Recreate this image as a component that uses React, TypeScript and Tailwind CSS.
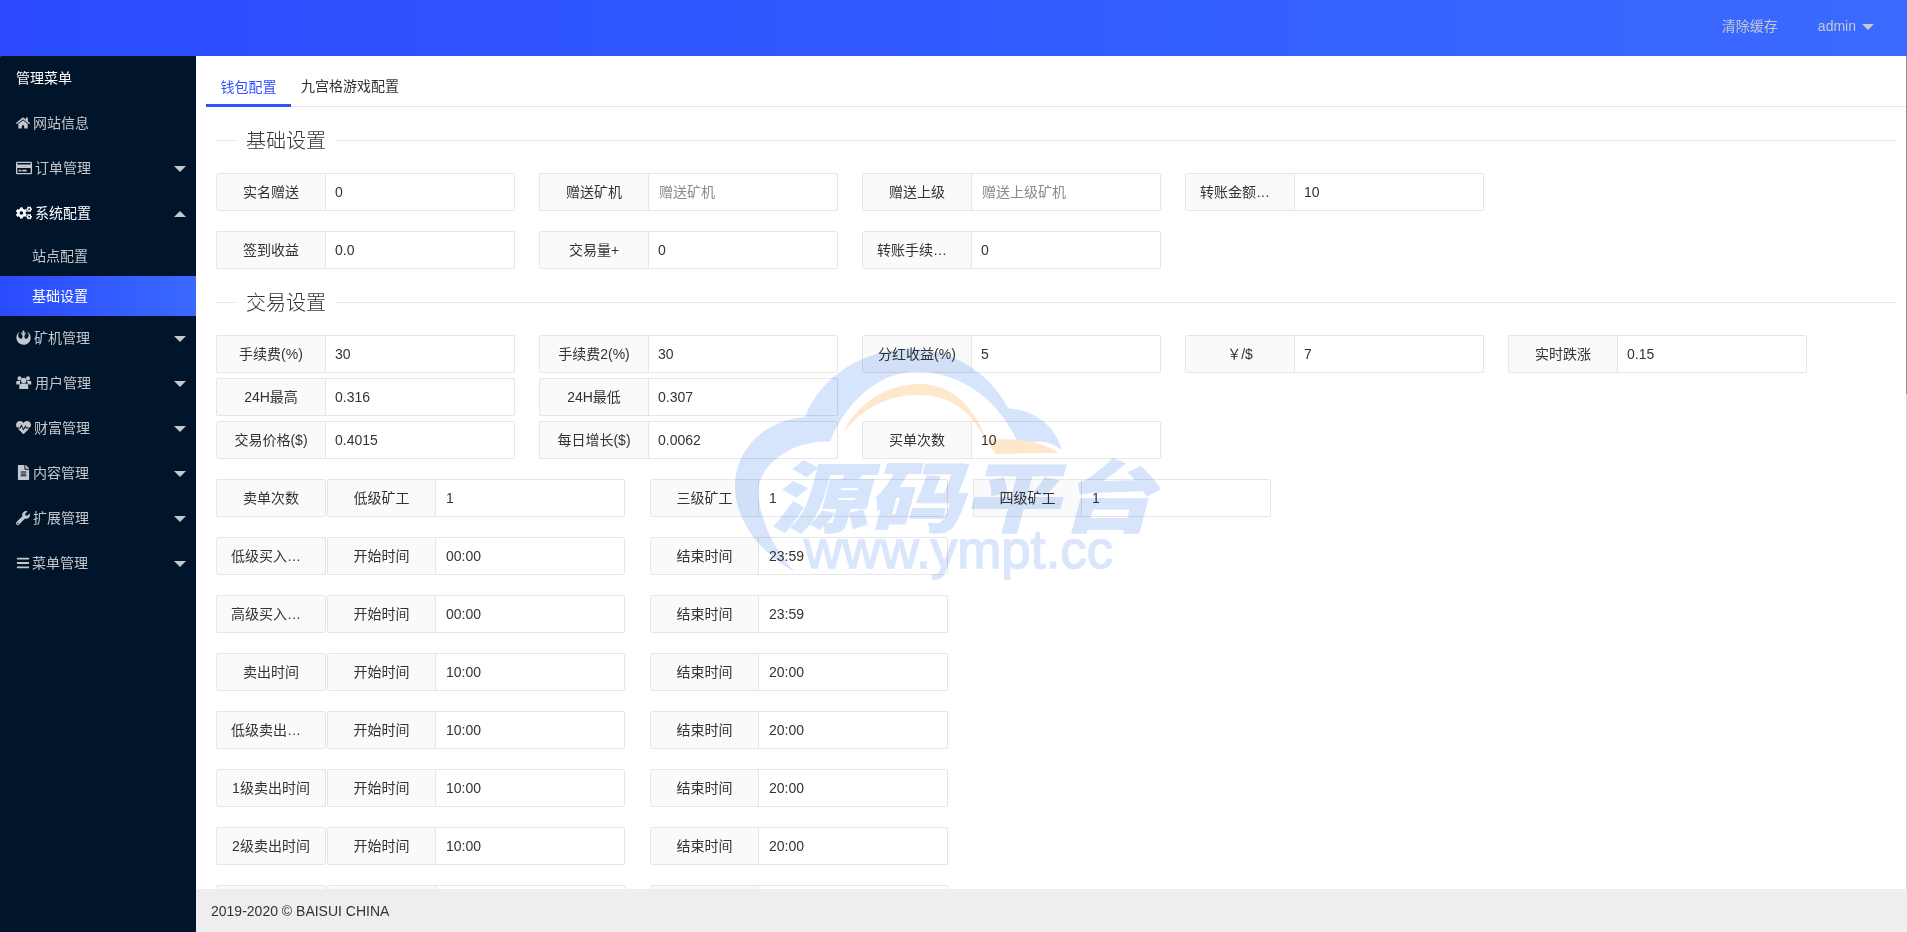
import { FaBars, FaCogs, FaFileAlt, FaHeartbeat, FaHome, FaRebel, FaRegCreditCard, FaWrench } from "react-icons/fa"
import type { IconType } from "react-icons"

const fontStack = "font-['Liberation_Sans','Noto_Sans_CJK_SC',sans-serif]"

// older font-awesome "users": the package only ships the thinner newer one
const UsersIcon: IconType = () => (
    <svg viewBox="0 0 30 26" width="15.5" height="13" fill="currentColor">
        <circle cx="6.5" cy="4.5" r="4" />
        <circle cx="23.5" cy="4.5" r="4" />
        <path d="M0 17V12.5C0 10.5 1.5 9.5 4 9.5H9C7.5 11.5 7 14.5 7.5 17H0ZM30 17V12.5C30 10.5 28.5 9.5 26 9.5H21C22.5 11.5 23 14.5 22.5 17H30Z" />
        <circle cx="15" cy="9" r="5.5" />
        <path d="M6 26V20C6 17 8 15 11 15H19C22 15 24 17 24 20V26H6Z" />
    </svg>
)

type NavItem = {
    icon: IconType
    size: number
    box: string
    label: string
    caret?: boolean
    open?: boolean
}

const navTop: NavItem[] = [
    { icon: FaHome, size: 14, box: "w-[17px]", label: "网站信息" },
    { icon: FaRegCreditCard, size: 16, box: "w-[19px]", label: "订单管理", caret: true },
    { icon: FaCogs, size: 16, box: "w-[19px]", label: "系统配置", caret: true, open: true },
]

const navBottom: NavItem[] = [
    { icon: FaRebel, size: 15, box: "w-[18px]", label: "矿机管理", caret: true },
    { icon: UsersIcon, size: 16, box: "w-[19px]", label: "用户管理", caret: true },
    { icon: FaHeartbeat, size: 15, box: "w-[18px]", label: "财富管理", caret: true },
    { icon: FaFileAlt, size: 15, box: "w-[17px]", label: "内容管理", caret: true },
    { icon: FaWrench, size: 14, box: "w-[17px]", label: "扩展管理", caret: true },
    { icon: FaBars, size: 14, box: "w-[16px]", label: "菜单管理", caret: true },
]

const timeRows = [
    ["低级买入时间", "00:00", "23:59"],
    ["高级买入时间", "00:00", "23:59"],
    ["卖出时间", "10:00", "20:00"],
    ["低级卖出时间", "10:00", "20:00"],
    ["1级卖出时间", "10:00", "20:00"],
    ["2级卖出时间", "10:00", "20:00"],
]

function Caret({ up }: { up?: boolean }) {
    return up ? (
        <span className="h-0 w-0 border-x-[6px] border-b-[6px] border-x-transparent border-b-[#c4c7cc]" />
    ) : (
        <span className="h-0 w-0 border-x-[6px] border-t-[6px] border-x-transparent border-t-[#c4c7cc]" />
    )
}

function SideItem({ item }: { item: NavItem }) {
    const Icon = item.icon
    return (
        <div className={`flex h-[45px] items-center pl-4 pr-[10px] text-sm ${item.open ? "text-white" : "text-[#c4c7cc]"}`}>
            <span className={`flex shrink-0 items-center pb-[2px] ${item.box}`}>
                <Icon size={item.size} />
            </span>
            <span className="flex-1 pb-[2px]">{item.label}</span>
            {item.caret && <Caret up={item.open} />}
        </div>
    )
}

function Legend({ title }: { title: string }) {
    return (
        <div className="flex h-[29px] items-center">
            <div className="h-px w-5 bg-[#e6e6e6]" />
            <span className="px-[10px] pt-[2px] text-[20px] font-light leading-[29px] text-[#333]">{title}</span>
            <div className="h-px flex-1 bg-[#e6e6e6]" />
        </div>
    )
}

// label + input, one bordered box
function Field({ label, value, placeholder }: { label: string; value?: string; placeholder?: string }) {
    return (
        <div className="flex h-[38px] w-[299px] shrink-0 rounded-[2px] border border-[#e6e6e6] text-sm">
            <div className="w-[109px] shrink-0 truncate border-r border-[#e6e6e6] bg-[#fafafa] px-[14px] text-center leading-[36px] text-[#333]">
                {label}
            </div>
            <div className={`flex-1 leading-[36px] ${value ? "pl-[9px] text-[#333]" : "pl-[10px] text-[#8a8a8a]"}`}>{value ?? placeholder}</div>
        </div>
    )
}

function RowLabel({ label }: { label?: string }) {
    return (
        <div className="h-[38px] w-[110px] shrink-0 truncate rounded-[2px] border border-[#e6e6e6] bg-[#fafafa] px-[14px] text-center text-sm leading-[36px] text-[#333]">
            {label}
        </div>
    )
}

function InlineField({ label, value }: { label?: string; value?: string }) {
    return (
        <div className="flex h-[38px] w-[298px] shrink-0 rounded-[2px] border border-[#e6e6e6] text-sm">
            <div className="w-[108px] shrink-0 border-r border-[#e6e6e6] bg-[#fafafa] text-center leading-[36px] text-[#333]">{label}</div>
            <div className="flex-1 pl-[10px] leading-[36px] text-[#333]">{value}</div>
        </div>
    )
}

function Watermark() {
    return (
        <div className="pointer-events-none absolute left-[720px] top-[340px] h-[250px] w-[460px] mix-blend-multiply">
            <svg viewBox="0 0 1380 750" className="absolute inset-0 h-full w-full">
                <path
                    fill="#d6e5fb"
                    d="M225 696C120 640 45 540 45 440C45 330 130 240 255 232C300 110 430 27 570 27C700 27 810 100 865 205C950 210 1010 265 1025 330C985 300 940 295 900 325C850 190 730 95 590 95C480 95 380 180 330 305C220 300 120 370 115 450C115 540 170 640 225 696Z"
                />
                <path
                    fill="#fde8cc"
                    d="M368 282C410 190 500 132 600 132C690 132 760 195 800 300C860 295 960 295 1015 340C960 338 890 340 830 343C800 310 780 260 740 220C700 180 650 165 590 165C500 165 420 210 368 282Z"
                />
            </svg>
            <div className="absolute left-[60px] top-[105px] origin-center -skew-x-12 scale-y-[0.8] whitespace-nowrap font-['Noto_Sans_CJK_SC',sans-serif] text-[96px] font-black leading-[96px] text-[#d6e5fb] [-webkit-text-stroke:1px_#d6e5fb]">
                源码平台
            </div>
            <div className="absolute left-[84px] top-[183px] whitespace-nowrap font-['Liberation_Sans',sans-serif] text-[53px] leading-[54px] text-[#d9e6fb] [-webkit-text-stroke:1.5px_#d9e6fb]">
                www.ympt.cc
            </div>
        </div>
    )
}

export default function App() {
    return (
        <div className={`relative flex h-[932px] flex-col overflow-hidden bg-white ${fontStack}`}>
            {/* Header */}
            <header className="flex h-14 shrink-0 items-center justify-end bg-gradient-to-r from-[#2b4aff] to-[#3b6aff] pb-[4px] pr-[33px] text-sm text-[#c4c9d6]">
                <span>清除缓存</span>
                <span className="ml-10">admin</span>
                <span className="ml-[6px] mt-[2px] h-0 w-0 border-x-[6px] border-t-[6px] border-x-transparent border-t-[#c4c9d6]" />
            </header>

            <div className="flex min-h-0 flex-1 bg-[#2b4aff]">
                {/* Sidebar */}
                <aside className="w-[196px] shrink-0 rounded-tl-[2px] bg-[#00152a]">
                    <div className="flex h-[45px] items-center pb-[2px] pl-4 text-sm text-white">管理菜单</div>
                    {navTop.map((item) => (
                        <SideItem key={item.label} item={item} />
                    ))}
                    <div className="flex h-10 items-center pl-8 text-sm text-[#c4c7cc]">站点配置</div>
                    <div className="flex h-10 items-center bg-gradient-to-r from-[#2b4aff] to-[#3b68ff] pl-8 text-sm text-white">基础设置</div>
                    {navBottom.map((item) => (
                        <SideItem key={item.label} item={item} />
                    ))}
                </aside>

                {/* Main */}
                <main className="relative flex min-w-0 flex-1 flex-col bg-white">
                    <div className="min-h-0 flex-1 overflow-hidden">
                        <div className="ml-[10px] flex h-[51px] items-end border-b border-[#e6e6e6] text-sm">
                            <div className="-mb-px flex h-[40px] w-[85px] items-center justify-center border-b-[3px] border-[#2f50ff] pt-[2px] text-[#2f50ff]">钱包配置</div>
                            <div className="flex h-[40px] items-center pb-[1px] pl-[10px] text-[#333]">九宫格游戏配置</div>
                        </div>

                        <div className="pl-5 pr-[10px] pt-[19px]">
                            <Legend title="基础设置" />
                            <div className="mt-[18px] flex gap-6">
                                <Field label="实名赠送" value="0" />
                                <Field label="赠送矿机" placeholder="赠送矿机" />
                                <Field label="赠送上级" placeholder="赠送上级矿机" />
                                <Field label="转账金额比例" value="10" />
                            </div>
                            <div className="mt-5 flex gap-6">
                                <Field label="签到收益" value="0.0" />
                                <Field label="交易量+" value="0" />
                                <Field label="转账手续费(%)" value="0" />
                            </div>

                            <div className="mt-[19px]">
                                <Legend title="交易设置" />
                            </div>
                            <div className="mt-[18px] flex gap-6">
                                <Field label="手续费(%)" value="30" />
                                <Field label="手续费2(%)" value="30" />
                                <Field label="分红收益(%)" value="5" />
                                <Field label="￥/$" value="7" />
                                <Field label="实时跌涨" value="0.15" />
                            </div>
                            <div className="mt-[5px] flex gap-6">
                                <Field label="24H最高" value="0.316" />
                                <Field label="24H最低" value="0.307" />
                            </div>
                            <div className="mt-[5px] flex gap-6">
                                <Field label="交易价格($)" value="0.4015" />
                                <Field label="每日增长($)" value="0.0062" />
                                <Field label="买单次数" value="10" />
                            </div>

                            <div className="mt-5 flex">
                                <RowLabel label="卖单次数" />
                                <div className="ml-px flex gap-[25px]">
                                    <InlineField label="低级矿工" value="1" />
                                    <InlineField label="三级矿工" value="1" />
                                    <InlineField label="四级矿工" value="1" />
                                </div>
                            </div>
                            {timeRows.map(([label, start, end]) => (
                                <div key={label} className="mt-5 flex">
                                    <RowLabel label={label} />
                                    <div className="ml-px flex gap-[25px]">
                                        <InlineField label="开始时间" value={start} />
                                        <InlineField label="结束时间" value={end} />
                                    </div>
                                </div>
                            ))}
                            {/* next row, only its top edge shows above the footer */}
                            <div className="mt-5 flex">
                                <RowLabel />
                                <div className="ml-px flex gap-[25px]">
                                    <InlineField />
                                    <InlineField />
                                </div>
                            </div>
                        </div>
                    </div>

                    <footer className="flex h-[43px] shrink-0 items-center bg-[#eeeeee] pl-[15px] text-sm text-[#333]">2019-2020 © BAISUI CHINA</footer>

                    {/* thin scrollbar */}
                    <div className="absolute right-0 top-0 h-[833px] w-px bg-[#d8d8d8]">
                        <div className="h-[338px] w-full bg-[#8f8f8f]" />
                    </div>
                </main>
            </div>

            <Watermark />
        </div>
    )
}
